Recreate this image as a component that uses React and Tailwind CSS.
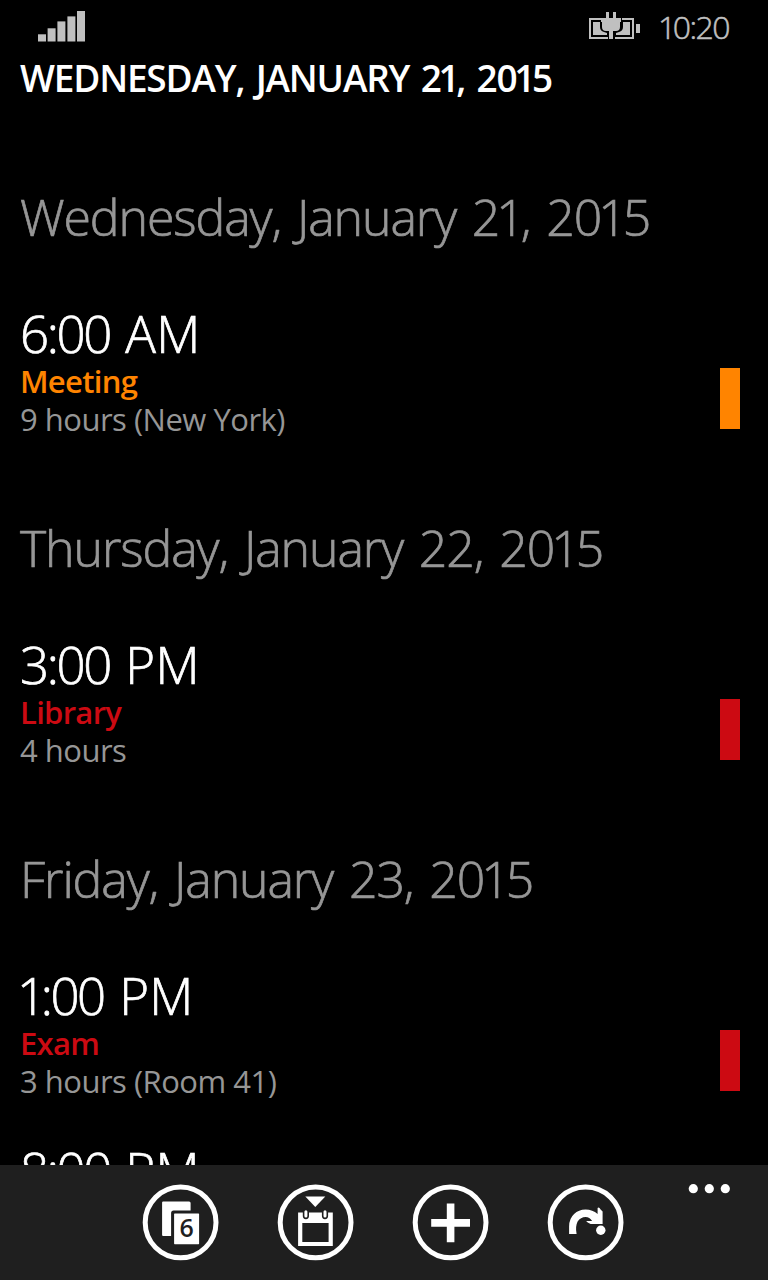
import React from 'react';

const days = [
  {
    date: 'Wednesday, January 21, 2015',
    events: [
      { time: '6:00 AM', name: 'Meeting', details: '9 hours (New York)', text: 'text-[#ff8400]', bar: 'bg-[#ff8400]' },
    ],
  },
  {
    date: 'Thursday, January 22, 2015',
    events: [
      { time: '3:00 PM', name: 'Library', details: '4 hours', text: 'text-[#cc0a12]', bar: 'bg-[#cc0a12]' },
    ],
  },
  {
    date: 'Friday, January 23, 2015',
    events: [
      { time: '1:00 PM', name: 'Exam', details: '3 hours (Room 41)', text: 'text-[#cc0a12]', bar: 'bg-[#cc0a12]' },
      { time: '8:00 PM' },
    ],
  },
];

// proportional "1": pull it closer to its neighbours
const Num = ({ children }) =>
  children.split(/(1)/).map((part, i) =>
    part === '1' ? <span key={i} className="ml-[-0.06em] mr-[-0.06em]">1</span> : part
  );

const StatusBar = () => (
  <div className="flex h-[52px] shrink-0 items-start pl-[38px] pr-[38px] text-[#c0c0c0]">
    <svg className="mt-[11px]" width="48" height="31" viewBox="0 0 48 31" fill="currentColor">
      <rect x="0" y="23.3" width="8" height="7.2" />
      <rect x="9.6" y="17.3" width="8" height="13.2" />
      <rect x="19.4" y="10.4" width="8" height="20.1" />
      <rect x="29.4" y="5.4" width="8" height="25.1" />
      <rect x="39" y="0" width="8" height="30.5" />
    </svg>
    <svg className="ml-auto mt-3" width="52" height="28" viewBox="0 0 52 28" fill="currentColor">
      <path d="M1 6h12v2H3v17h17v2H1z" />
      <path d="M34 6h12v21H27v-2h17V8H34z" />
      <rect x="48" y="12" width="4" height="9" />
      <path d="M5 10h7v5q0 4 4 5l3 1v2H5z" />
      <path d="M42 10h-7v5q0 4-4 5l-3 1v2h14z" />
      <path d="M18 0h3v6h4V0h3v6h5v4h-1v5q0 4-4 4h-3v8h-4v-8h-3q-4 0-4-4v-5h-1V6h5z" />
    </svg>
    <span className="ml-[20px] mt-[5px] w-[70px] whitespace-nowrap text-[32px] font-light leading-[44px] tracking-[-1.6px] [-webkit-text-stroke:0.5px_#c0c0c0]">
      <Num>10:20</Num>
    </span>
  </div>
);

const EventTime = ({ time }) => {
  const [clock, suffix] = time.split(' ');
  return (
    <div className="h-[59px] whitespace-nowrap pt-px text-[51px] font-light leading-[60px] text-white [-webkit-text-stroke:0.7px_#fff] [word-spacing:2px]">
      <span className="tracking-[-2.4px]"><Num>{clock}</Num></span>
      <span className="tracking-[0.2px]">{' '}{suffix}</span>
    </div>
  );
};

const EventRow = ({ event }) => (
  <div className="flex h-[135px] justify-between">
    <div>
      <EventTime time={event.time} />
      {event.name && (
        <>
          <div className={`mt-px whitespace-nowrap text-[31px] font-semibold leading-[38px] tracking-[-0.7px] ${event.text}`}>{event.name}</div>
          <div className="whitespace-nowrap text-[31px] leading-[38px] tracking-[-0.5px] text-[#969696]">
            {event.details}
          </div>
        </>
      )}
    </div>
    {event.bar && <div className={`mt-[66px] h-[61px] w-5 ${event.bar}`} />}
  </div>
);

const DayGroup = ({ day }) => (
  <section>
    <h2 className="mb-[51px] whitespace-nowrap pt-0.5 text-[50px] font-light leading-[68px] tracking-[-1.1px] text-[#969696] [-webkit-text-stroke:0.7px_#969696] [word-spacing:4px]">
      <Num>{day.date}</Num>
    </h2>
    <div className="flex flex-col gap-10">
      {day.events.map((event) => (
        <EventRow key={event.time} event={event} />
      ))}
    </div>
  </section>
);

const RoundButton = ({ label, children }) => (
  <button aria-label={label} className="h-[76px] w-[76px]">
    <svg className="overflow-visible" width="76" height="76" viewBox="-0.6 -0.4 76 76" fill="#fff">
      <circle cx="38" cy="38" r="35.4" fill="none" stroke="#fff" strokeWidth="5" />
      {children}
    </svg>
  </button>
);

const AppBar = () => (
  <div className="flex h-[115px] shrink-0 items-start bg-[#1f1f1f] pl-[142px] pr-[38px]">
    <div className="mt-[19px] flex gap-[59px]">
      <RoundButton label="day">
        <path d="M20.5 17.2h26q1.5 0 1.5 1.5v7.5H31q-2.5 0-2.5 2.5V51.5h-8q-1 0-1-1V18.2q0-1 1-1z" />
        <rect x="31.5" y="29" width="25" height="30.8" rx="0.6" />
        <text x="44" y="52.5" textAnchor="middle" fontSize="25" fontWeight="600" fill="#1f1f1f">6</text>
      </RoundButton>
      <RoundButton label="today">
        <path d="M27.7 12h20L37.7 22.5z" />
        <path fillRule="evenodd" d="M20.5 28H55.2v33.7H20.5zM24.7 38.5V57.6h26.3V38.5z" />
        <rect x="26" y="25" width="4.6" height="9" rx="2.3" stroke="#1f1f1f" strokeWidth="1.6" />
        <rect x="45.1" y="25" width="4.6" height="9" rx="2.3" stroke="#1f1f1f" strokeWidth="1.6" />
      </RoundButton>
      <RoundButton label="new">
        <path d="M34.2 19h7.6v15.7h15.6v7.6H41.8v15.6h-7.6V42.3H18.6v-7.6h15.6z" />
      </RoundButton>
      <RoundButton label="next">
        <path d="M21.5 49.5V42Q21.5 34 26.5 29.5Q31 25 38 25Q45 25 50 29.5V23.5Q51.5 22.5 53 25L55 27V39.5H43Q39.5 38 38.5 36.5H44.5Q42 32.5 38 32.5Q33 32.5 30 37Q27.5 42 29 49.5z" />
        <circle cx="53.2" cy="45.8" r="4.7" />
      </RoundButton>
    </div>
    <svg className="ml-auto mt-[19px]" width="42" height="10" viewBox="0 0 42 10" fill="#fff">
      <circle cx="5.3" cy="4.7" r="4.6" />
      <circle cx="21.3" cy="4.7" r="4.6" />
      <circle cx="37.3" cy="4.7" r="4.6" />
    </svg>
  </div>
);

export default function App() {
  return (
    <div className="flex h-[1280px] w-[768px] flex-col overflow-hidden bg-black font-['Open_Sans','Noto_Sans',sans-serif]">
      <StatusBar />
      <h1 className="mb-[78px] mt-px shrink-0 whitespace-nowrap pl-5 text-[37px] font-semibold leading-[50px] tracking-[-1.2px] text-white [word-spacing:3px]">
        <Num>WEDNESDAY, JANUARY 21, 2015</Num>
      </h1>
      <main className="flex min-h-0 flex-1 flex-col gap-[75px] overflow-hidden pl-5 pr-7">
        {days.map((day) => (
          <DayGroup key={day.date} day={day} />
        ))}
      </main>
      <AppBar />
    </div>
  );
}
